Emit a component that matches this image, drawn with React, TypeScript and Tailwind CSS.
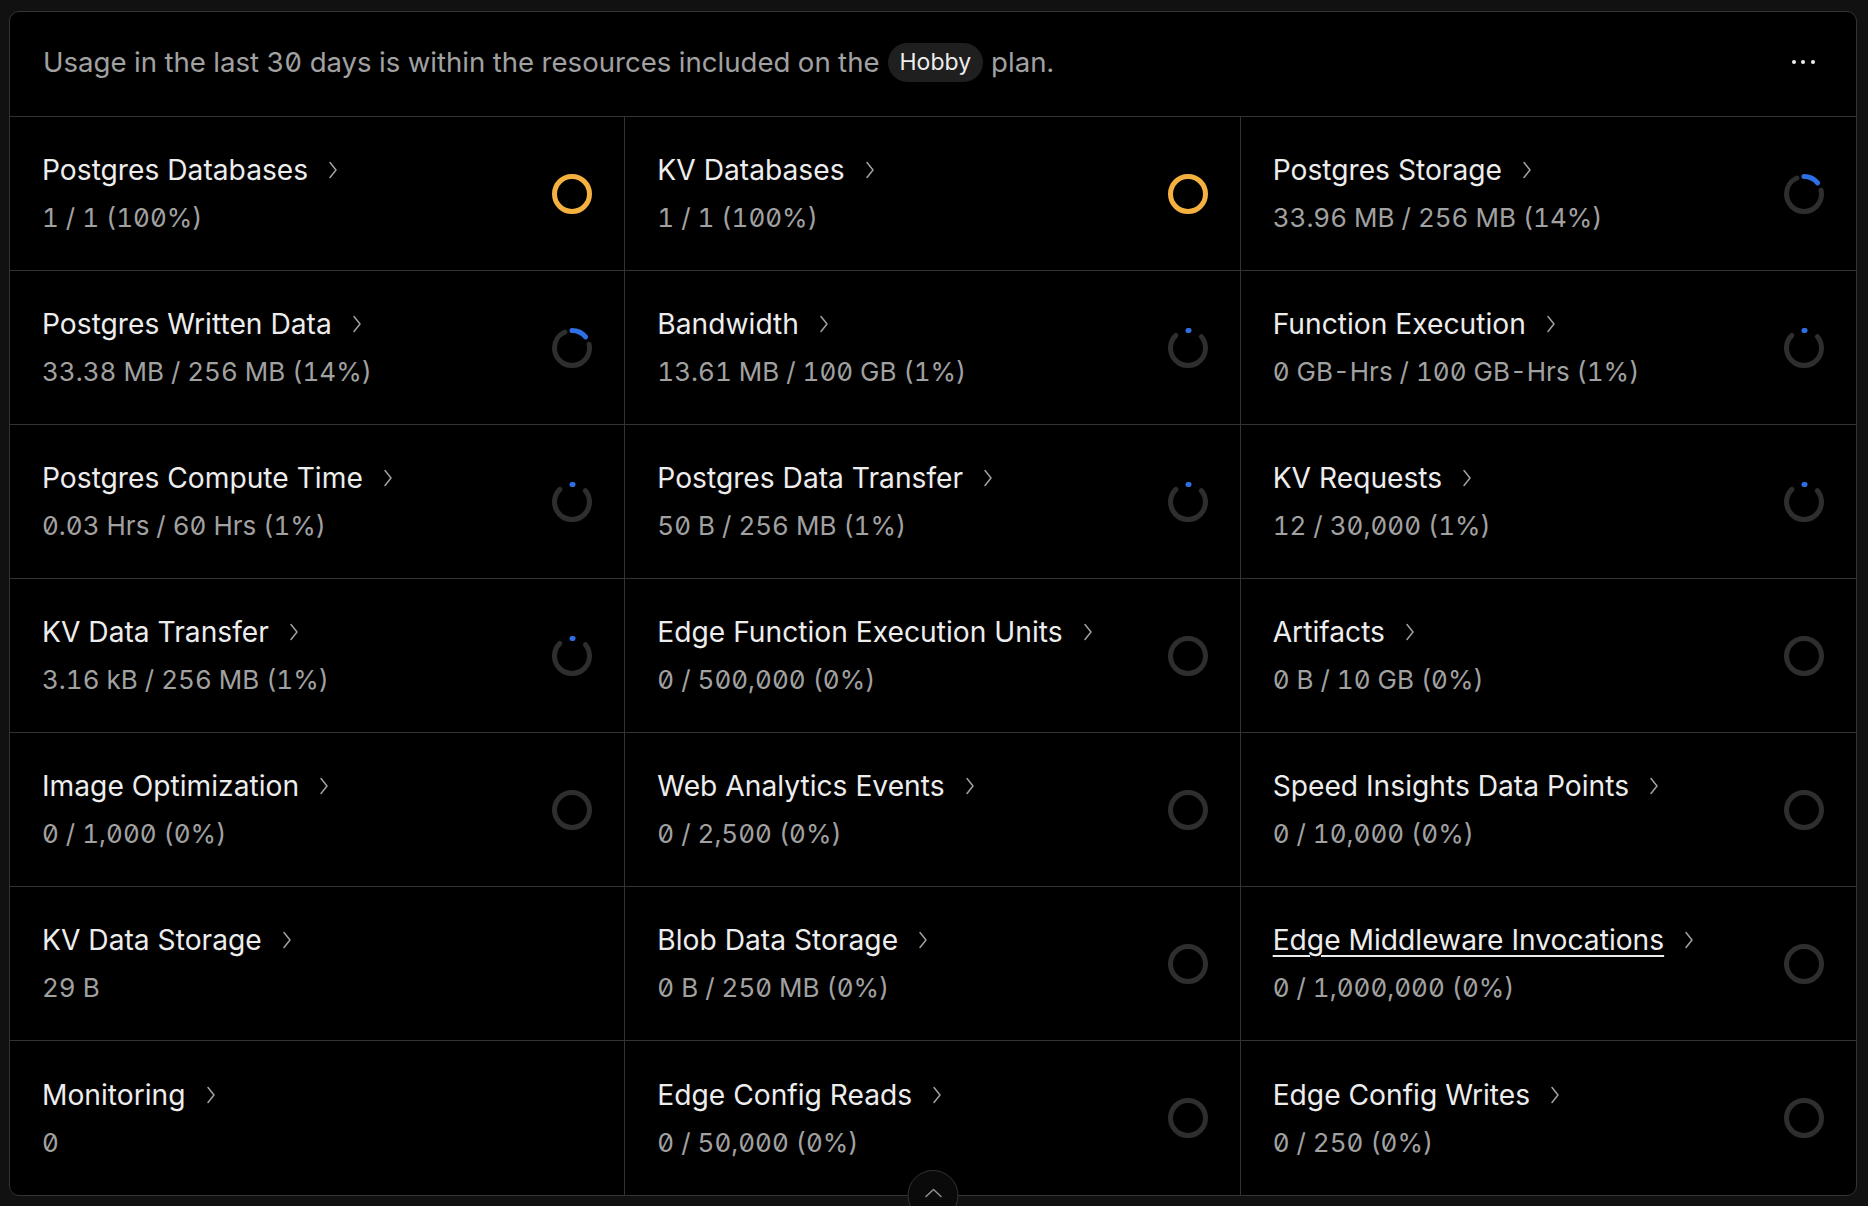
import React from "react";

type Item = { title: string; value: string; pct: number | null; full?: boolean; underline?: boolean };

const items: Item[] = [
  { title: "Postgres Databases", value: "1 / 1 (100%)", pct: 100, full: true },
  { title: "KV Databases", value: "1 / 1 (100%)", pct: 100, full: true },
  { title: "Postgres Storage", value: "33.96 MB / 256 MB (14%)", pct: 14 },
  { title: "Postgres Written Data", value: "33.38 MB / 256 MB (14%)", pct: 14 },
  { title: "Bandwidth", value: "13.61 MB / 100 GB (1%)", pct: 1 },
  { title: "Function Execution", value: "0 GB-Hrs / 100 GB-Hrs (1%)", pct: 1 },
  { title: "Postgres Compute Time", value: "0.03 Hrs / 60 Hrs (1%)", pct: 1 },
  { title: "Postgres Data Transfer", value: "50 B / 256 MB (1%)", pct: 1 },
  { title: "KV Requests", value: "12 / 30,000 (1%)", pct: 1 },
  { title: "KV Data Transfer", value: "3.16 kB / 256 MB (1%)", pct: 1 },
  { title: "Edge Function Execution Units", value: "0 / 500,000 (0%)", pct: 0 },
  { title: "Artifacts", value: "0 B / 10 GB (0%)", pct: 0 },
  { title: "Image Optimization", value: "0 / 1,000 (0%)", pct: 0 },
  { title: "Web Analytics Events", value: "0 / 2,500 (0%)", pct: 0 },
  { title: "Speed Insights Data Points", value: "0 / 10,000 (0%)", pct: 0 },
  { title: "KV Data Storage", value: "29 B", pct: null },
  { title: "Blob Data Storage", value: "0 B / 250 MB (0%)", pct: 0 },
  { title: "Edge Middleware Invocations", value: "0 / 1,000,000 (0%)", pct: 0, underline: true },
  { title: "Monitoring", value: "0", pct: null },
  { title: "Edge Config Reads", value: "0 / 50,000 (0%)", pct: 0 },
  { title: "Edge Config Writes", value: "0 / 250 (0%)", pct: 0 },
];

function Gauge({ pct, full }: { pct: number; full?: boolean }) {
  const r = 17.5;
  const C = 2 * Math.PI * r;
  if (full) {
    return (
      <svg width="40" height="40" viewBox="0 0 40 40">
        <circle cx="20" cy="20" r={r} fill="none" stroke="#f5b13f" strokeWidth="5" />
      </svg>
    );
  }
  if (pct === 0) {
    return (
      <svg width="40" height="40" viewBox="0 0 40 40">
        <circle cx="20" cy="20" r={r} fill="none" stroke="#2e2e2e" strokeWidth="5" />
      </svg>
    );
  }
  const blueLen = (pct / 100) * C;
  const gap = pct <= 2 ? 14 : 8;
  const grayLen = C - blueLen - 2 * gap;
  return (
    <svg width="40" height="40" viewBox="0 0 40 40">
      <g transform="rotate(-90 20 20)">
        <circle
          cx="20"
          cy="20"
          r={r}
          fill="none"
          stroke="#2e2e2e"
          strokeWidth="5"
          strokeLinecap="round"
          strokeDasharray={`${grayLen} ${C}`}
          strokeDashoffset={-(blueLen + gap)}
        />
        <circle
          cx="20"
          cy="20"
          r={r}
          fill="none"
          stroke="#2f6fe4"
          strokeWidth="5"
          strokeLinecap="round"
          strokeDasharray={`${blueLen} ${C}`}
        />
      </g>
    </svg>
  );
}

function Chevron() {
  return (
    <svg width="10" height="20" viewBox="0 0 10 20" className="shrink-0">
      <polyline points="2,2.5 8,10 2,17.5" fill="none" stroke="#a1a1a1" strokeWidth="1.5" strokeLinecap="round" strokeLinejoin="round" />
    </svg>
  );
}

export default function App() {
  return (
    <div className="h-screen overflow-hidden bg-[#111111] pt-[11px] pl-[9px] pr-[11px] font-['Inter',_'Noto_Sans',_sans-serif]">
      <div className="relative rounded-[10px] border border-[#333333] bg-black">
        <div className="flex h-[105px] items-center justify-between border-b border-[#333333] pl-[33px] pr-[33px] pb-[4px]">
          <div className="flex items-center text-[27.6px] leading-[36px] text-[#a1a1a1] tabular-nums slashed-zero">
            <span>Usage in the last 30 days is within the resources included on the</span>
            <span className="mx-[8px] inline-flex h-[39px] items-center rounded-full bg-[#1f1f1f] px-[12px] text-[23px] text-[#ededed]">
              Hobby
            </span>
            <span>plan.</span>
          </div>
          <button className="flex h-[40px] w-[40px] items-center justify-center gap-[5.5px]">
            <span className="h-[4px] w-[4px] rounded-full bg-[#ededed]" />
            <span className="h-[4px] w-[4px] rounded-full bg-[#ededed]" />
            <span className="h-[4px] w-[4px] rounded-full bg-[#ededed]" />
          </button>
        </div>
        <div className="grid grid-cols-3">
          {items.map((it, i) => {
            const col = i % 3;
            const row = Math.floor(i / 3);
            const lastRow = row === 6;
            return (
              <div
                key={it.title}
                className={`flex h-[154px] items-center justify-between pl-[32px] pr-[32px] border-[#333333] ${
                  col < 2 ? "border-r" : ""
                } ${lastRow ? "" : "border-b"}`}
              >
                <div className="flex flex-col gap-[12px] pt-[1px]">
                  <div className="flex items-center gap-[20px]">
                    <span
                      className={`text-[28.2px] leading-[36px] text-[#ededed] ${
                        it.underline ? "underline decoration-[1.5px] underline-offset-[5px]" : ""
                      }`}
                    >
                      {it.title}
                    </span>
                    <Chevron />
                  </div>
                  <div className="text-[26px] leading-[36px] text-[#a1a1a1] tabular-nums slashed-zero">{it.value}</div>
                </div>
                {it.pct !== null && <Gauge pct={it.pct} full={it.full} />}
              </div>
            );
          })}
        </div>
        <button className="absolute bottom-[-26px] left-1/2 flex h-[51px] w-[51px] -translate-x-1/2 items-start justify-center rounded-full border border-[#333333] bg-[#0a0a0a] pt-[17px]">
          <svg width="18" height="10" viewBox="0 0 18 10">
            <polyline points="1.5,8.5 9,1.5 16.5,8.5" fill="none" stroke="#8f8f8f" strokeWidth="1.5" strokeLinecap="round" strokeLinejoin="round" />
          </svg>
        </button>
      </div>
    </div>
  );
}
